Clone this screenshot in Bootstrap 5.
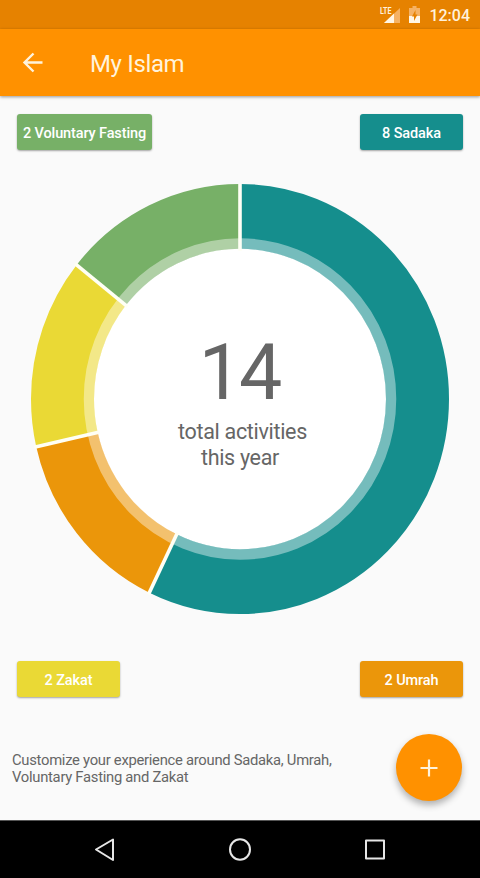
<!DOCTYPE html>
<html lang="en">
<head>
    <meta charset="UTF-8">
    <meta name="viewport" content="width=device-width, initial-scale=1.0">
    <title>My Islam</title>
    <link href="https://cdn.jsdelivr.net/npm/bootstrap@5.3.0/dist/css/bootstrap.min.css" rel="stylesheet">
    <style>
        body {
            font-family: Roboto, "Liberation Sans", sans-serif;
            background: #fafafa;
            color: #666;
        }
        svg {
            display: block;
        }
        .screen {
            width: 480px;
            height: 878px;
        }
        .status-bar {
            height: 29px;
            background: #e68200;
            padding-right: 10px;
            color: #fff1dc;
        }
        .clock {
            font-size: 16px;
            font-weight: 500;
            line-height: 29px;
            margin-left: 9px;
            padding-top: 1px;
        }
        .app-bar {
            height: 67px;
            background: #ff9100;
            box-shadow: 0 1px 3px rgba(0, 0, 0, .4);
            padding: 0 21px;
            color: #fff3dc;
        }
        .app-title {
            font-size: 24px;
            font-weight: 400;
            letter-spacing: -.35px;
            line-height: 28px;
            margin: 2px 0 0 45px;
        }
        .legend-row {
            padding: 0 17px;
        }
        .legend-btn {
            width: 103px;
            height: 36px;
            padding: 2px 0 0;
            border: 0;
            border-radius: 3px;
            font-size: 14.5px;
            font-weight: 500;
            letter-spacing: -.12px;
            line-height: 36px;
            color: #fff;
            box-shadow: 0 1px 2px rgba(0, 0, 0, .35);
        }
        .legend-btn:hover {
            color: #fff;
        }
        .legend-wide {
            width: 135px;
        }
        .bg-fasting { background: #77b067 !important; }
        .bg-sadaka { background: #158e8d !important; }
        .bg-zakat { background: #ead935 !important; }
        .bg-umrah { background: #eb960a !important; }
        .chart {
            display: grid;
            width: 418px;
            height: 430px;
            margin: 34px auto 47px 31px;
        }
        .chart > * {
            grid-area: 1 / 1;
        }
        .total-count {
            font-size: 77px;
            font-weight: 400;
            letter-spacing: -3px;
            line-height: 84px;
            padding: 4px 2px 4px 0;
        }
        .total-label {
            font-size: 21.5px;
            letter-spacing: -.32px;
            line-height: 26px;
        }
        .total-label-top {
            padding-left: 5px;
        }
        .footer-row {
            padding: 0 18px 0 12px;
            margin-top: 37px;
        }
        .hint {
            font-size: 14.8px;
            letter-spacing: -.28px;
            line-height: 17.5px;
            padding-top: 3px;
        }
        .fab {
            width: 66px;
            height: 67px;
            padding: 0;
            border: 0;
            border-radius: 50%;
            background: #ff9100;
            box-shadow: 0 4px 7px rgba(0, 0, 0, .3);
        }
        .nav-keys {
            height: 58px;
            background: #000;
            border-top: 1px solid #555;
        }
    </style>
</head>
<body>
    <div class="screen d-flex flex-column overflow-hidden">
        <div class="status-bar d-flex align-items-center justify-content-end">
            <svg width="22" height="19" viewBox="0 0 22 19">
                <path d="M21 3v15H5z" fill="#f5b264"/>
                <path d="M15 8.600v9.400H5z" fill="#fff6e6"/>
                <text x="1" y="8.500" font-size="9.500" font-weight="700" textLength="11.500" lengthAdjust="spacingAndGlyphs" fill="#fff1dc">LTE</text>
            </svg>
            <svg class="ms-2" width="11" height="17" viewBox="0 0 11 17">
                <path d="M3.500 0h4v2H11v15H0V2h3.500z" fill="#f5b264"/>
                <path d="M0 10h11v7H0z" fill="#fff6e6"/>
                <path d="M6.500 4L3 10.500h2V15l3.500-6.500h-2z" fill="#e68200"/>
            </svg>
            <span class="clock">12:04</span>
        </div>

        <header class="app-bar d-flex align-items-center flex-shrink-0">
            <svg class="mb-1" width="24" height="24" viewBox="0 0 24 24" fill="none" stroke="#fff3dc" stroke-width="2.400">
                <path d="M21.500 13.500H4M12.500 4.500l-9 9 9 9"/>
            </svg>
            <h1 class="app-title">My Islam</h1>
        </header>

        <main class="flex-grow-1">
            <div class="legend-row d-flex justify-content-between" style="padding-top: 18px">
                <button type="button" class="btn legend-btn legend-wide bg-fasting">2 Voluntary Fasting</button>
                <button type="button" class="btn legend-btn bg-sadaka">8 Sadaka</button>
            </div>

            <div class="chart">
                <svg width="418" height="430" viewBox="0 0 418 418" preserveAspectRatio="none" fill="none">
                    <circle cx="209" cy="209" r="150" fill="#fff"/>
                    <!-- one unit of path length per activity, clockwise from the top -->
                    <g stroke-width="63" transform="rotate(-90 209 209)">
                        <circle cx="209" cy="209" r="177.500" pathLength="14" stroke="#158e8d" stroke-dasharray="8 6"/>
                        <circle cx="209" cy="209" r="177.500" pathLength="14" stroke="#eb960a" stroke-dasharray="2 12" stroke-dashoffset="-8"/>
                        <circle cx="209" cy="209" r="177.500" pathLength="14" stroke="#ead935" stroke-dasharray="2 12" stroke-dashoffset="-10"/>
                        <circle cx="209" cy="209" r="177.500" pathLength="14" stroke="#77b067" stroke-dasharray="2 12" stroke-dashoffset="-12"/>
                    </g>
                    <circle cx="209" cy="209" r="151" stroke="#fff" stroke-opacity=".41" stroke-width="10.500"/>
                    <g stroke="#fffff5" stroke-width="3.600">
                        <path d="M209 65V-2"/>
                        <path d="M209 65V-2" transform="rotate(205.710 209 209)"/>
                        <path d="M209 65V-2" transform="rotate(257.140 209 209)"/>
                        <path d="M209 65V-2" transform="rotate(308.570 209 209)"/>
                    </g>
                </svg>
                <div class="text-center align-self-center">
                    <div class="total-count">14</div>
                    <div class="total-label total-label-top">total activities</div>
                    <div class="total-label">this year</div>
                </div>
            </div>

            <div class="legend-row d-flex justify-content-between">
                <button type="button" class="btn legend-btn bg-zakat">2 Zakat</button>
                <button type="button" class="btn legend-btn bg-umrah">2 Umrah</button>
            </div>

            <div class="footer-row d-flex align-items-center justify-content-between">
                <div class="hint">Customize your experience around Sadaka, Umrah,<br>Voluntary Fasting and Zakat</div>
                <button type="button" class="btn fab d-flex align-items-center justify-content-center" aria-label="Add">
                    <svg width="18" height="18" viewBox="0 0 18 18" stroke="#fff3dc" stroke-width="2.200">
                        <path d="M.5 9h17M9 .5v17"/>
                    </svg>
                </button>
            </div>
        </main>

        <nav class="nav-keys d-flex align-items-center justify-content-center flex-shrink-0">
            <svg width="292" height="26" viewBox="-10 0 292 26" fill="none" stroke="#e6e6e6" stroke-width="2" stroke-linejoin="round">
                <path d="M9 2.500v20.500L-8 12.500z"/>
                <ellipse cx="136" cy="12.500" rx="10" ry="10.200"/>
                <rect x="262" y="3.500" width="18" height="18"/>
            </svg>
        </nav>
    </div>

    <script src="https://cdn.jsdelivr.net/npm/bootstrap@5.3.0/dist/js/bootstrap.bundle.min.js"></script>
</body>
</html>
